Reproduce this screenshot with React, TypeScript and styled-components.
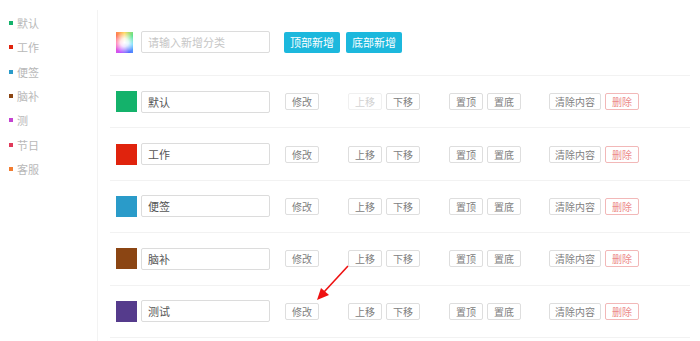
import React from "react";
import styled, { createGlobalStyle } from "styled-components";

const Global = createGlobalStyle`
  html, body { margin: 0; padding: 0; background: #fff; }
  body { font-family: "Microsoft YaHei", "Noto Sans CJK SC", "Liberation Sans", sans-serif; }
  * { box-sizing: border-box; }
`;

const Page = styled.div`
  display: flex;
  width: 700px;
  height: 341px;
  overflow: hidden;
  position: relative;
`;

const Sidebar = styled.ul`
  list-style: none;
  margin: 10px 0 0 0;
  padding: 1px 0 0 9px;
  width: 98px;
  flex: none;
  border-right: 1px solid #f3f3f3;
`;

const SideItem = styled.li`
  display: flex;
  align-items: center;
  height: 24.3px;
  gap: 4px;
  font-size: 11px;
  color: #b8b8b8;
`;

const Dot = styled.span<{ $c: string }>`
  width: 4px;
  height: 4px;
  background: ${(p) => p.$c};
  flex: none;
`;

const Main = styled.div`
  flex: 1;
  padding: 0 10px 0 12px;
`;

const TopBar = styled.div`
  display: flex;
  align-items: center;
  height: 76px;
  padding: 9px 0 0 6px;
  border-bottom: 1px solid #f2f2f2;
`;

const Picker = styled.div`
  width: 17px;
  height: 21px;
  flex: none;
  background:
    radial-gradient(circle at 50% 50%, rgba(255,255,255,1) 0%, rgba(255,255,255,0.85) 30%, rgba(255,255,255,0.1) 80%),
    conic-gradient(from 0deg, #ffd040, #40e080, #40d0ff, #4060ff, #c040ff, #ff40a0, #ff6040, #ffd040);
`;

const Field = styled.input`
  width: 129px;
  height: 22px;
  margin-left: 8px;
  border: 1px solid #dcdcdc;
  border-radius: 2px;
  padding: 0 6px;
  font: inherit;
  font-size: 11px;
  color: #555;
  outline: none;
  &::placeholder { color: #c6c6c6; }
`;

const PrimaryBtn = styled.button<{ $ml?: number }>`
  height: 21px;
  width: 56px;
  padding: 0;
  border: none;
  border-radius: 2px;
  background: #1cb8dd;
  color: #fff;
  font: inherit;
  font-size: 11px;
  margin-left: ${(p) => p.$ml ?? 0}px;
`;

const Row = styled.div`
  display: flex;
  align-items: center;
  height: 52.4px;
  padding-left: 6px;
  border-bottom: 1px solid #f2f2f2;
`;

const Swatch = styled.div<{ $c: string }>`
  width: 21px;
  height: 21px;
  flex: none;
  background: ${(p) => p.$c};
  margin-right: -4px;
`;

const Group = styled.div<{ $ml: number }>`
  display: flex;
  gap: 4px;
  margin-left: ${(p) => p.$ml}px;
`;

const SmallBtn = styled.button<{ $w?: number; $kind?: "normal" | "disabled" | "danger" }>`
  height: 17px;
  width: ${(p) => p.$w ?? 34}px;
  padding: 0;
  background: #fff;
  border-radius: 2px;
  font: inherit;
  font-size: 10px;
  line-height: 15px;
  border: 1px solid
    ${(p) => (p.$kind === "danger" ? "#f2b8b8" : p.$kind === "disabled" ? "#f0f0f0" : "#dedede")};
  color: ${(p) => (p.$kind === "danger" ? "#ec8a8a" : p.$kind === "disabled" ? "#d2d2d2" : "#808080")};
`;

const Arrow = styled.svg`
  position: absolute;
  left: 312px;
  top: 262px;
  width: 42px;
  height: 42px;
  pointer-events: none;
`;

const side = [
  { n: "默认", c: "#14b26b" },
  { n: "工作", c: "#e0230d" },
  { n: "便签", c: "#2a9bc9" },
  { n: "脑补", c: "#8b4513" },
  { n: "测", c: "#c443d0" },
  { n: "节日", c: "#e03a5a" },
  { n: "客服", c: "#f27c30" },
];

const rows = [
  { n: "默认", c: "#14b26b" },
  { n: "工作", c: "#e0230d" },
  { n: "便签", c: "#2a9bc9" },
  { n: "脑补", c: "#8b4513" },
  { n: "测试", c: "#553b8c" },
];

export default function App() {
  return (
    <>
      <Global />
      <Page>
        <Sidebar>
          {side.map((s) => (
            <SideItem key={s.n}>
              <Dot $c={s.c} />
              {s.n}
            </SideItem>
          ))}
        </Sidebar>
        <Main>
          <TopBar>
            <Picker />
            <Field placeholder="请输入新增分类" />
            <PrimaryBtn $ml={14}>顶部新增</PrimaryBtn>
            <PrimaryBtn $ml={6}>底部新增</PrimaryBtn>
          </TopBar>
          {rows.map((r, i) => (
            <Row key={r.n}>
              <Swatch $c={r.c} />
              <Field defaultValue={r.n} />
              <Group $ml={15}>
                <SmallBtn>修改</SmallBtn>
              </Group>
              <Group $ml={29}>
                <SmallBtn $kind={i === 0 ? "disabled" : "normal"}>上移</SmallBtn>
                <SmallBtn>下移</SmallBtn>
              </Group>
              <Group $ml={29}>
                <SmallBtn>置顶</SmallBtn>
                <SmallBtn>置底</SmallBtn>
              </Group>
              <Group $ml={28}>
                <SmallBtn $w={52}>清除内容</SmallBtn>
                <SmallBtn $kind="danger">删除</SmallBtn>
              </Group>
            </Row>
          ))}
        </Main>
        <Arrow viewBox="0 0 42 42">
          <line x1="36" y1="4" x2="12" y2="30" stroke="#ee1111" strokeWidth="1.6" />
          <polygon points="5,38 9,26 17,33" fill="#ee1111" />
        </Arrow>
      </Page>
    </>
  );
}
